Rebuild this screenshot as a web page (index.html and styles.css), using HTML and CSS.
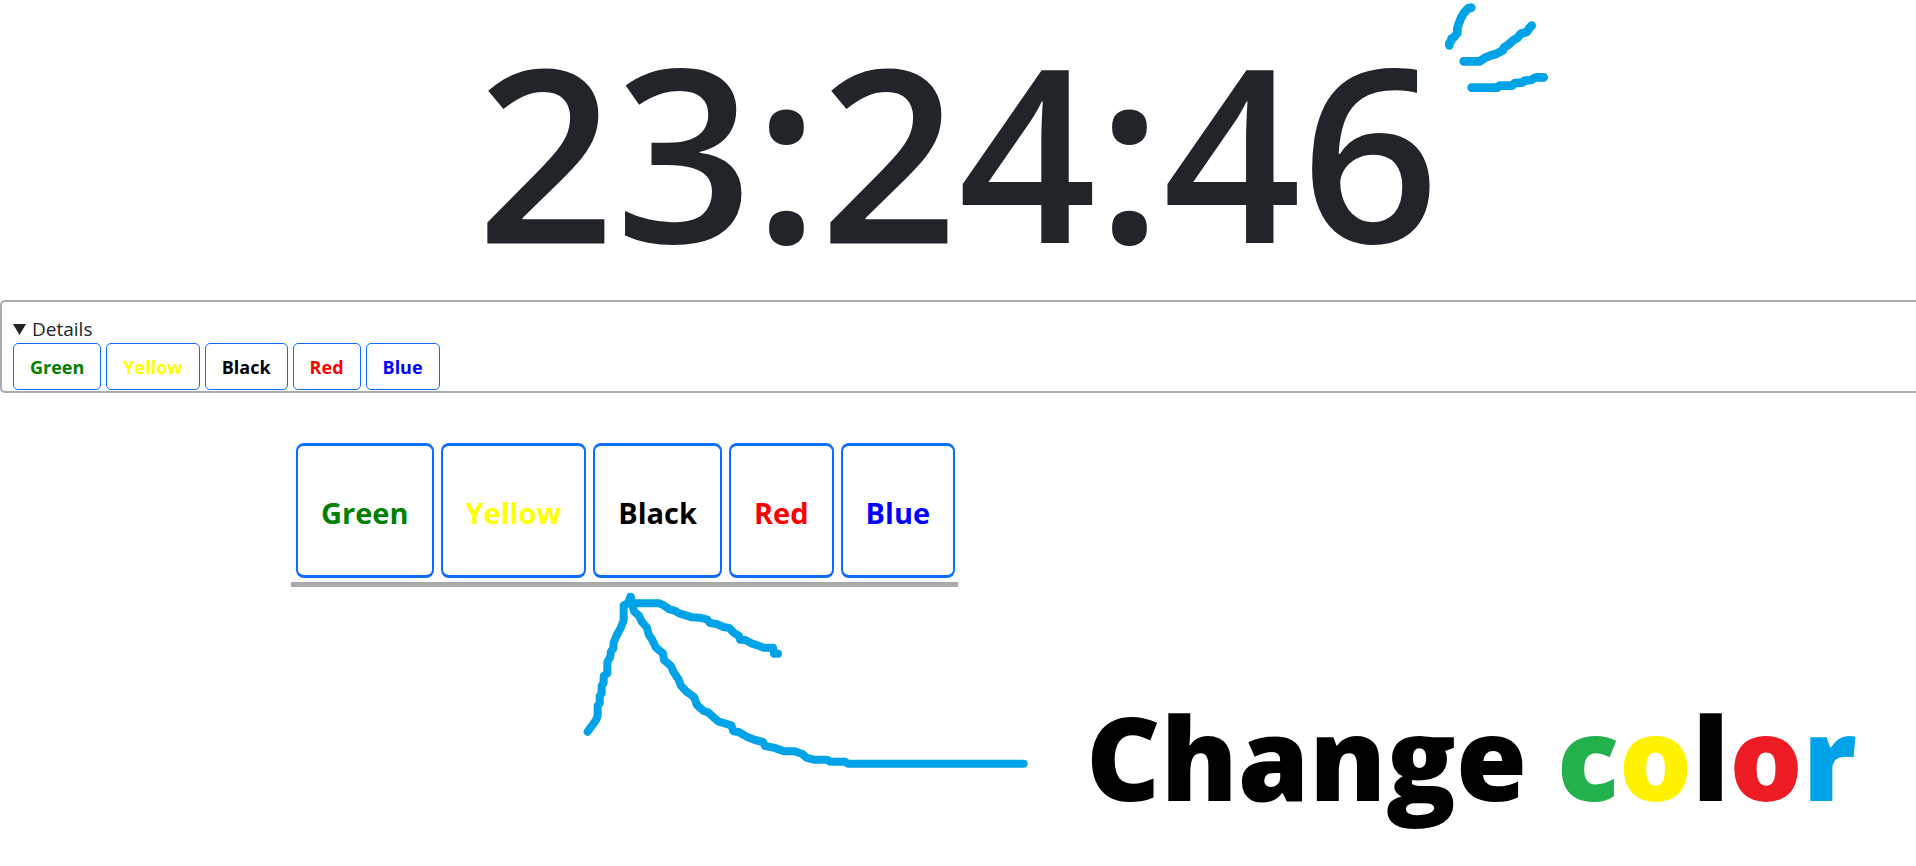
FILE: index.html
```html
<!DOCTYPE html>
<html lang="en">
<head>
<meta charset="utf-8">
<title>Clock</title>
<link rel="stylesheet" href="styles.css">
</head>
<body>
<header class="clock">
  <h1 class="clock-time">23:24:46</h1>
  <svg class="clock-rays" viewBox="0 0 450 330" aria-hidden="true">
    <path d="M154 23L145 25L133 37L123 54L116 72L112 86L112 99L101 113L95 115L93 124L88 130L88 136"/>
    <path d="M131 184L180 184L195 173L210 167L228 162L247 152L253 142L263 136L281 120L292 114L303 101L320 96L327 86L335 77"/>
    <path d="M155 263L232 263L239 257L276 257L285 249L306 248L315 242L334 240L343 234L352 232L371 232"/>
  </svg>
</header>
<main>
  <details class="panel" open>
    <summary class="panel-title"><svg class="marker" viewBox="0 0 13 11" aria-hidden="true"><path d="M0 0H13L6.500 11Z"/></svg>Details</summary>
    <div class="swatches">
      <button type="button" class="swatch green">Green</button>
      <button type="button" class="swatch yellow">Yellow</button>
      <button type="button" class="swatch black">Black</button>
      <button type="button" class="swatch red">Red</button>
      <button type="button" class="swatch blue">Blue</button>
    </div>
  </details>
  <section class="closeup">
    <button type="button" class="swatch-large green">Green</button>
    <button type="button" class="swatch-large yellow">Yellow</button>
    <button type="button" class="swatch-large black">Black</button>
    <button type="button" class="swatch-large red">Red</button>
    <button type="button" class="swatch-large blue">Blue</button>
  </section>
  <section class="note">
    <svg class="note-arrow" viewBox="0 21 1440 579" aria-hidden="true">
      <path d="M53 455L77 422L83 407L83 377L89 370L89 348L95 340L95 317L101 309L101 288L112 280L112 246L120 233L123 214L130 205L131 188L139 168L152 144L161 121L161 76L173 70L182 51"/>
      <path d="M182 51L186 70L268 70L283 77L298 88L314 92L330 101L348 106L366 112L390 113L412 119L420 129L440 132L460 141L478 144L491 158L507 168L510 179L526 180L544 190L563 196L580 203L609 203L612 221L624 221"/>
      <path d="M182 51L186 70L192 94L207 107L215 125L231 143L236 163L247 180L258 203L279 220L282 240L303 258L310 275L325 297L333 317L350 335L372 351L381 375L401 393L414 397L444 424L484 436L490 454L506 456L530 470L555 480L579 486L585 498L611 503L644 514L674 514L697 522L709 533L731 539L771 539L780 545L825 545L833 551L1361 551"/>
    </svg>
    <p class="note-text">Change <span class="c-green">c</span><span class="c-yellow">o</span>l<span class="c-red">o</span><span class="c-blue">r</span></p>
  </section>
</main>
</body>
</html>
```
FILE: styles.css
```css
* {
  box-sizing: border-box;
}

body {
  margin: 0;
  background: #fff;
  color: #212529;
  font-family: "Open Sans", "Noto Sans", sans-serif;
  font-size: 19px;
  line-height: 28px;
}

button {
  background: #fff;
  border-color: #0d6efd;
  border-style: solid;
  font-family: inherit;
  font-weight: 700;
  cursor: pointer;
}

.clock {
  position: relative;
}

.clock-time {
  margin: 0;
  font-size: 242px;
  font-weight: 600;
  line-height: 298px;
  padding-bottom: 2px;
  text-align: center;
  white-space: nowrap;
}

.clock-rays {
  position: absolute;
  top: 0;
  left: calc(50% + 462px);
  width: 150px;
  height: 110px;
}

.clock-rays path,
.note-arrow path {
  fill: none;
  stroke: #00a2e8;
  stroke-width: 24px;
  stroke-linecap: round;
  stroke-linejoin: round;
}

.clock-rays path {
  stroke-width: 26px;
}

.panel {
  padding: 13px 11px 1px;
  border: 2px solid #aaa;
  border-right: 0;
  border-radius: 5px 0 0 5px;
}

.panel-title {
  display: flex;
  align-items: center;
  gap: 6px;
  cursor: pointer;
}

.marker {
  width: 13px;
  height: 11px;
  fill: #212529;
}

.swatches {
  display: flex;
  gap: 5px;
}

.swatch {
  padding: 12px 16px 10px;
  border-width: 1px;
  border-radius: 5px;
  font-size: 18px;
  line-height: 23px;
}

.closeup {
  display: flex;
  gap: 7px;
  width: fit-content;
  margin: 50px 0 0 291px;
  padding: 0 3px 4px 5px;
  border-bottom: 5px solid #aaa;
}

.swatch-large {
  min-height: 135px;
  padding: 4px 23px 0;
  border-width: 3px 2px;
  border-radius: 8px;
  font-size: 29px;
  line-height: 40px;
}

.green { color: green; }
.yellow { color: yellow; }
.black { color: black; }
.red { color: red; }
.blue { color: blue; }

.note {
  display: flex;
  align-items: flex-start;
  gap: 36px;
  padding-left: 570px;
}

.note-arrow {
  flex: none;
  width: 480px;
  height: 193px;
}

.note-text {
  margin: 90px 0 0;
  color: #000;
  font-size: 115px;
  font-weight: 800;
  line-height: 160px;
  white-space: nowrap;
}

.c-green { color: #22b14c; }
.c-yellow { color: #fff200; }
.c-red { color: #ed1c24; }
.c-blue { color: #00a2e8; }
```
